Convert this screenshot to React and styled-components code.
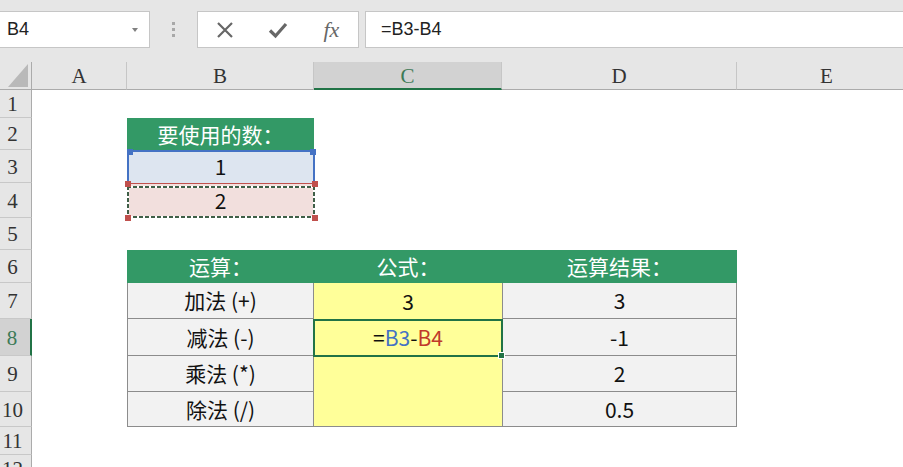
import React from 'react';
import styled, { createGlobalStyle } from 'styled-components';

const Global = createGlobalStyle`
  html, body { margin: 0; padding: 0; background: #fff; overflow: hidden; }
  body { font-family: "Noto Sans", "Noto Sans CJK SC", sans-serif; }
`;

const Page = styled.div`
  width: 903px;
  height: 467px;
  overflow: hidden;
  background: #fff;
`;

/* ---------- formula bar ---------- */
const Toolbar = styled.div`
  height: 62px;
  box-sizing: border-box;
  padding-top: 11px;
  background: #e6e6e6;
  display: flex;
  align-items: flex-start;
`;

const NameBox = styled.div`
  width: 150px;
  height: 37px;
  box-sizing: border-box;
  background: #fff;
  border: 1px solid #c6c6c6;
  border-left: none;
  display: flex;
  align-items: center;
  justify-content: space-between;
  padding: 0 11px 0 7px;
  font: 18px "Liberation Sans", Arial, sans-serif;
  color: #222;
`;

const Caret = styled.span`
  width: 0;
  height: 0;
  border-left: 3px solid transparent;
  border-right: 3px solid transparent;
  border-top: 4px solid #808080;
`;

const Grip = styled.div`
  width: 47px;
  height: 37px;
  display: flex;
  flex-direction: column;
  align-items: center;
  justify-content: center;
  gap: 3px;
`;

const GripDot = styled.span`
  width: 3px;
  height: 3px;
  background: #a8a8a8;
`;

const IconBox = styled.div`
  width: 162px;
  height: 37px;
  box-sizing: border-box;
  background: #fff;
  border: 1px solid #c6c6c6;
  display: flex;
  align-items: center;
`;

const IconSlot = styled.div`
  width: 54px;
  display: flex;
  justify-content: center;
  align-items: center;
  color: #676767;
`;

const Fx = styled.span`
  font: italic 22px "Liberation Serif", "Times New Roman", serif;
  color: #676767;
  line-height: 1;
`;

const FormulaInput = styled.div`
  flex: 1;
  margin-left: 6px;
  height: 37px;
  box-sizing: border-box;
  background: #fff;
  border: 1px solid #c6c6c6;
  border-right: none;
  display: flex;
  align-items: center;
  padding-left: 15px;
  font: 18px "Liberation Sans", Arial, sans-serif;
  color: #222;
`;

/* ---------- sheet ---------- */
const COLS = '32px 95px 187px 188px 235px 180px';

const Sheet = styled.div`
  display: flex;
  flex-direction: column;
`;

const SheetRow = styled.div`
  display: grid;
  grid-template-columns: ${COLS};
  height: ${p => p.$h}px;
`;

const HeaderFont = `
  font-family: "Liberation Serif", "Times New Roman", serif;
  font-size: 21px;
  line-height: 1;
`;

const Corner = styled.div`
  position: relative;
  background: #e6e6e6;
  box-sizing: border-box;
  border-right: 1px solid #ababab;
  border-bottom: 1px solid #ababab;
  &::after {
    content: '';
    position: absolute;
    right: 3px;
    bottom: 2px;
    width: 20px;
    height: 23px;
    background: #b9b9b9;
    clip-path: polygon(100% 0, 100% 100%, 0 100%);
  }
`;

const ColHeader = styled.div`
  box-sizing: border-box;
  display: flex;
  align-items: center;
  justify-content: center;
  ${HeaderFont}
  padding-top: 2px;
  background: ${p => (p.$active ? '#d2d2d2' : '#e6e6e6')};
  color: ${p => (p.$active ? '#3d7a57' : '#333')};
  border-right: 1px solid #c6c6c6;
  border-bottom: ${p => (p.$active ? '2px solid #217346' : '1px solid #ababab')};
`;

const RowHeader = styled.div`
  box-sizing: border-box;
  display: flex;
  align-items: center;
  justify-content: center;
  padding-right: 6px;
  padding-top: 2px;
  ${HeaderFont}
  background: ${p => (p.$active ? '#d2d2d2' : '#e6e6e6')};
  color: ${p => (p.$active ? '#3d7a57' : '#333')};
  border-bottom: 1px solid #c8c8c8;
  border-right: ${p => (p.$active ? '2px solid #217346' : '1px solid #ababab')};
`;

const FILLS = {
  empty: '#ffffff',
  head: '#339966',
  body: '#f2f2f2',
  yellow: '#ffff99',
  blue: '#dde5f0',
  pink: '#f2dfdd',
};

const LINE = '1px solid #8c8c8c';

const Cell = styled.div`
  position: relative;
  box-sizing: border-box;
  display: flex;
  align-items: center;
  justify-content: center;
  white-space: nowrap;
  font-family: "Noto Sans CJK SC", "Noto Sans", sans-serif;
  font-size: 21px;
  line-height: 1;
  background: ${p => FILLS[p.$kind || 'empty']};
  color: ${p => (p.$kind === 'head' ? '#ffffff' : '#111111')};
  border-left: ${p => (p.$bl ? LINE : 'none')};
  border-right: ${p => (p.$br ? LINE : 'none')};
  border-bottom: ${p => (p.$bb ? LINE : 'none')};
`;

const Ref = styled.span`
  color: ${p => p.$color};
`;

/* overlays */
const RefBox = styled.div`
  position: absolute;
  z-index: 2;
  top: 0;
  left: 0;
  right: -1px;
  bottom: 0;
  box-sizing: border-box;
  border: 2px solid #4472c4;
  border-bottom: none;
  pointer-events: none;
`;

const RedRef = styled.div`
  position: absolute;
  z-index: 3;
  top: 0;
  left: 0;
  right: -1px;
  bottom: 0;
  box-sizing: border-box;
  border-top: 1px solid #c0504d;
  pointer-events: none;
`;

const ANT = '#3f5f47';
const Marquee = styled.div`
  position: absolute;
  top: 2px;
  left: 0;
  right: 0;
  bottom: 0;
  background:
    repeating-linear-gradient(90deg, ${ANT} 0 4px, #fff 4px 6px) top / 100% 2px no-repeat,
    repeating-linear-gradient(90deg, ${ANT} 0 4px, #fff 4px 6px) bottom / 100% 2px no-repeat,
    repeating-linear-gradient(180deg, ${ANT} 0 4px, #fff 4px 6px) left / 2px 100% no-repeat,
    repeating-linear-gradient(180deg, ${ANT} 0 4px, #fff 4px 6px) right / 2px 100% no-repeat;
`;

const Handle = styled.span`
  position: absolute;
  width: 6px;
  height: 6px;
  background: ${p => p.$color};
  ${p => (p.$v === 'top' ? 'top: -3px;' : 'bottom: -3px;')}
  ${p => (p.$h === 'left' ? 'left: -2px;' : 'right: -3px;')}
`;

const Selection = styled.div`
  position: absolute;
  z-index: 2;
  top: 0;
  left: -1px;
  right: -1px;
  bottom: -1px;
  border: 2px solid #217346;
  box-sizing: border-box;
  pointer-events: none;
`;

const FillHandle = styled.span`
  position: absolute;
  right: -4px;
  bottom: -4px;
  width: 5px;
  height: 5px;
  background: #217346;
  border: 1px solid #fff;
`;

const XIcon = () => (
  <svg width="18" height="18" viewBox="0 0 18 18">
    <path d="M2 2 L16 16 M16 2 L2 16" stroke="#676767" strokeWidth="2.2" fill="none" />
  </svg>
);

const CheckIcon = () => (
  <svg width="20" height="18" viewBox="0 0 20 18">
    <path d="M2 9.5 L7.5 15 L18 3" stroke="#676767" strokeWidth="3.2" fill="none" />
  </svg>
);

const HEIGHTS = [28, 32, 33, 35, 32, 33, 36, 37, 36, 35, 28, 28];

const headRow = (b, c, d) => [
  {}, { kind: 'head', text: b }, { kind: c ? 'head' : 'empty', text: c }, { kind: d ? 'head' : 'empty', text: d }, {},
];

const bodyRow = (b, c, d, last, extra) => [
  {},
  { kind: 'body', text: b, bl: true, br: true, bb: true },
  { kind: 'yellow', text: c, bb: last, ...extra },
  { kind: 'body', text: d, br: true, bl: true, bb: true },
  {},
];

const empty = () => [{}, {}, {}, {}, {}];

const ROWS = [
  empty(),
  headRow('要使用的数：'),
  [{}, { kind: 'blue', text: '1', ref: 'blue' }, {}, {}, {}],
  [{}, { kind: 'pink', text: '2', ref: 'red' }, {}, {}, {}],
  empty(),
  headRow('运算：', '公式：', '运算结果：'),
  bodyRow('加法 (+)', '3', '3'),
  bodyRow(
    '减法 (-)',
    <>
      =<Ref $color="#4472c4">B3</Ref>-<Ref $color="#c0392b">B4</Ref>
    </>,
    '-1',
    false,
    { selected: true }
  ),
  bodyRow('乘法 (*)', '', '2'),
  bodyRow('除法 (/)', '', '0.5', true),
  empty(),
  empty(),
];

const LETTERS = ['A', 'B', 'C', 'D', 'E'];

export default function App() {
  return (
    <Page>
      <Global />
      <Toolbar>
        <NameBox>
          <span>B4</span>
          <Caret />
        </NameBox>
        <Grip>
          <GripDot />
          <GripDot />
          <GripDot />
        </Grip>
        <IconBox>
          <IconSlot><XIcon /></IconSlot>
          <IconSlot><CheckIcon /></IconSlot>
          <IconSlot><Fx>fx</Fx></IconSlot>
        </IconBox>
        <FormulaInput>=B3-B4</FormulaInput>
      </Toolbar>
      <Sheet>
        <SheetRow $h={28}>
          <Corner />
          {LETTERS.map(l => (
            <ColHeader key={l} $active={l === 'C'}>{l}</ColHeader>
          ))}
        </SheetRow>
        {ROWS.map((cells, r) => (
          <SheetRow key={r} $h={HEIGHTS[r]}>
            <RowHeader $active={r === 7}>{r + 1}</RowHeader>
            {cells.map((c, i) => (
              <Cell key={i} $kind={c.kind} $bl={c.bl} $br={c.br} $bb={c.bb}>
                {c.text}
                {c.ref === 'blue' && (
                  <RefBox>
                    <Handle $color="#4472c4" $v="top" $h="left" />
                    <Handle $color="#4472c4" $v="top" $h="right" />
                  </RefBox>
                )}
                {c.ref === 'red' && (
                  <RedRef>
                    <Marquee />
                    <Handle $color="#c0504d" $v="top" $h="left" />
                    <Handle $color="#c0504d" $v="top" $h="right" />
                    <Handle $color="#c0504d" $v="bottom" $h="left" />
                    <Handle $color="#c0504d" $v="bottom" $h="right" />
                  </RedRef>
                )}
                {c.selected && (
                  <Selection>
                    <FillHandle />
                  </Selection>
                )}
              </Cell>
            ))}
          </SheetRow>
        ))}
      </Sheet>
    </Page>
  );
}
